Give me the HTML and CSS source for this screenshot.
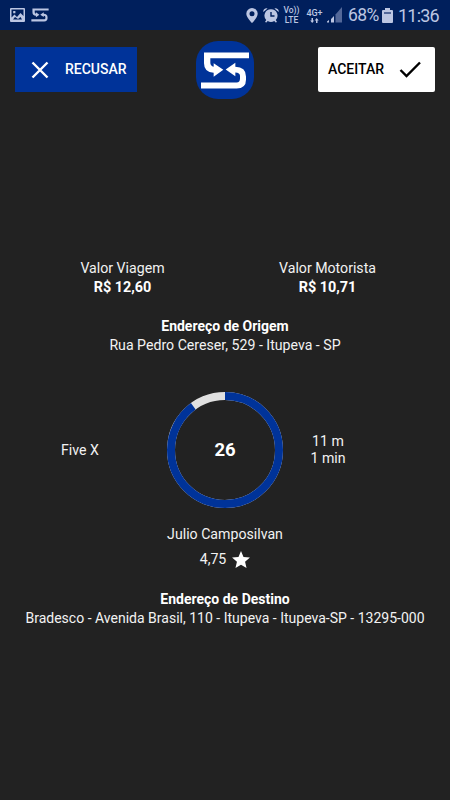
FILE: index.html
```html
<!DOCTYPE html>
<html lang="pt-BR">
    <head>
        <meta charset="utf-8">
        <title>Nova corrida</title>
        <meta name="viewport" content="width=device-width, initial-scale=1">
        <link rel="stylesheet" href="styles.css">
    </head>

    <body>
        <svg width="0" height="0" class="defs">
            <symbol id="logo" viewBox="60 62 150 116">
                <path d="M207 66V83H91V97Q91 106 101 109V98L130 118L101 139V127Q72 125 72 98V66Z"/>
                <path d="M63 174V156H170Q180 156 180 144V136Q180 127 166 126V137L137 117L166 97V109Q198 110 198 138V148Q198 174 170 174Z"/>
            </symbol>
        </svg>

        <div class="status">
            <svg class="pic" width="15" height="14" viewBox="0 0 15 14"><path fill-rule="evenodd" d="M1 0H14Q15 0 15 1V13Q15 14 14 14H1Q0 14 0 13V1Q0 0 1 0ZM1.5 1.5V9.5L4.5 6.5L7 9L10.5 5L13.5 8V1.5ZM3 11.5H12L10.5 9L8 11L5 9ZM3.2 3H5.4V5.2H3.2Z"/></svg>
            <svg class="mini" width="18" height="14"><use href="#logo"/></svg>
            <div class="right">
                <svg class="pin" width="12" height="15" viewBox="0 0 12 15"><path fill-rule="evenodd" d="M6 0A5.7 5.7 0 0 1 11.7 5.7C11.7 9.5 6 15 6 15S.3 9.5 .3 5.7A5.7 5.7 0 0 1 6 0ZM6 3.2A2.5 2.5 0 1 0 6 8.2A2.5 2.5 0 1 0 6 3.2Z"/></svg>
                <svg class="alarm" width="16" height="15" viewBox="0 0 16 15"><path fill-rule="evenodd" d="M8 1.3A6.3 6.3 0 0 1 12.8 11.9L14 14L12.6 14.6L11.3 13A6.3 6.3 0 0 1 4.7 13L3.4 14.6L2 14L3.2 11.9A6.3 6.3 0 0 1 8 1.3ZM7.3 4V8.8H11.5V7.3H8.7V4ZM.3 4A3.2 3.2 0 0 1 4.6 .5ZM15.7 4A3.2 3.2 0 0 0 11.4 .5Z"/></svg>
                <span class="volte"><span>Vo))</span><span>LTE</span></span>
                <span class="net">4G+
                    <svg width="9" height="5" viewBox="0 0 9 5"><path d="M1.5 0H3V2.5H4.2L2.2 5L.2 2.5H1.5ZM6 5H7.5V2.5H8.7L6.7 0L4.7 2.5H6Z"/></svg>
                </span>
                <svg class="signal" width="15" height="16" viewBox="0 0 15 16"><path d="M0 14.5L2 13V15.5H0ZM4 12L7 9V15.5H4Z"/><path class="dim" d="M8.5 7.5L15 0V15.5H8.5Z"/></svg>
                <span class="pct">68%</span>
                <svg class="bat" width="11" height="15" viewBox="0 0 11 15"><path d="M3 0H8V2H10Q11 2 11 3V14Q11 15 10 15H1Q0 15 0 14V3Q0 2 1 2H3Z"/><path class="empty" d="M2 4H9V6H2Z"/></svg>
                <span class="clock">11:36</span>
            </div>
        </div>

        <div class="top">
            <button class="btn refuse">
                <svg width="18" height="18" viewBox="0 0 18 18"><path d="M1.5 1.5L16.5 16.5M16.5 1.5L1.5 16.5"/></svg>
                <span>RECUSAR</span>
            </button>
            <div class="logo"><svg width="50" height="39"><use href="#logo"/></svg></div>
            <button class="btn accept">
                <span>ACEITAR</span>
                <svg width="23" height="18" viewBox="0 0 23 18"><path d="M1.5 9L7.5 15L21 1.5"/></svg>
            </button>
        </div>

        <div class="values">
            <div>Valor Viagem<br><b>R$ 12,60</b></div>
            <div>Valor Motorista<br><b>R$ 10,71</b></div>
        </div>

        <div class="address origin">
            <b>Endereço de Origem</b>
            <p>Rua Pedro Cereser, 529 - Itupeva - SP</p>
        </div>

        <div class="trip">
            <div class="kind">Five X</div>
            <div class="timer">
                <svg width="116" height="116" viewBox="0 0 116 116">
                    <circle class="track" cx="58" cy="58" r="54"/>
                    <circle class="left" cx="58" cy="58" r="54" pathLength="360" stroke-dasharray="324 36" transform="rotate(-90 58 58)"/>
                </svg>
                <span>26</span>
            </div>
            <div class="dist">11 m<br>1 min</div>
        </div>

        <div class="name">Julio Camposilvan</div>
        <div class="rate">
            <span>4,75</span>
            <svg width="18" height="17" viewBox="2 2 20 19"><path d="M12 17.27L18.18 21l-1.64-7.03L22 9.24l-7.19-.61L12 2 9.19 8.63 2 9.24l5.46 4.73L5.82 21z"/></svg>
        </div>

        <div class="address">
            <b>Endereço de Destino</b>
            <p class="dest">Bradesco - Avenida Brasil, 110 - Itupeva - Itupeva-SP - 13295-000</p>
        </div>
    </body>
</html>
```

FILE: styles.css
```css
*{margin:0;padding:0;box-sizing:border-box;}
body{height:800px;overflow:hidden;background:#222;color:#f2f2f2;font:14.15px/19px Roboto,sans-serif;text-align:center;}
svg{display:block;flex:none;}
b{color:#fff;font-weight:700;font-size:14px;}
.defs{position:absolute;}

/* barra de status */
.status{display:flex;align-items:center;height:30px;padding:0 12px 0 10px;background:#001f5c;color:#bcc6e2;}
.status svg{fill:#bcc6e2;}
.status .mini{margin-left:6px;}
.right{display:flex;align-items:center;margin-left:auto;}
.alarm{margin-left:5px;}
.volte{display:flex;flex-direction:column;width:17px;margin-left:4px;font-size:8.5px;line-height:10px;font-weight:500;white-space:nowrap;}
.net{display:flex;flex-direction:column;align-items:center;width:17px;margin-left:6px;font-size:9px;line-height:10px;font-weight:500;}
.signal{margin-left:4px;}
.status .dim{fill:#536899;}
.status .empty{fill:#536899;}
.pct{width:30px;margin-left:6px;font-size:17.5px;letter-spacing:-.6px;}
.bat{margin-left:4px;}
.clock{width:40px;margin-left:5px;font-size:18px;letter-spacing:-.8px;white-space:nowrap;}

/* topo */
.top{display:flex;justify-content:space-between;align-items:flex-start;padding:11px 15px 0;}
.btn{display:flex;align-items:center;height:45px;margin-top:6px;border:0;font:500 14px/19px Roboto,sans-serif;}
.refuse{width:122px;padding-left:16px;background:#039;color:#fff;}
.refuse svg{margin-right:16px;fill:none;stroke:#fff;stroke-width:2.4;}
.accept{width:117px;padding-left:10px;border-radius:2px;background:#fff;color:#000;}
.accept svg{margin-left:15px;fill:none;stroke:#000;stroke-width:2.4;}
.logo{display:flex;align-items:center;justify-content:center;width:58px;height:58px;margin-left:-5px;border-radius:22px;background:#039;}
.logo svg{fill:#fff;}

/* valores */
.values{display:flex;margin-top:160px;padding:0 20px;}
.values div{flex:1;}
.values b{font-size:14.4px;}

.origin{margin-top:20px;}

/* contador */
.trip{display:grid;grid-template-columns:38px 116px 38px;column-gap:26px;align-items:center;justify-content:center;margin-top:37px;}
.kind,.dist{line-height:17px;white-space:nowrap;}
.kind{margin-left:-42px;margin-right:42px;}
.timer{display:grid;place-items:center;}
.timer svg,.timer span{grid-area:1/1;}
.timer span{color:#fff;font-size:18.5px;font-weight:700;}
.timer circle{fill:none;stroke-width:8;}
.track{stroke:#e0e0e0;}
.timer .left{stroke:#039;}

.name{margin-top:17px;}
.rate{display:flex;align-items:center;justify-content:center;gap:6px;margin:6px 0 21px;}
.rate svg{fill:#fff;}
.dest{font-size:14.03px;}
```
